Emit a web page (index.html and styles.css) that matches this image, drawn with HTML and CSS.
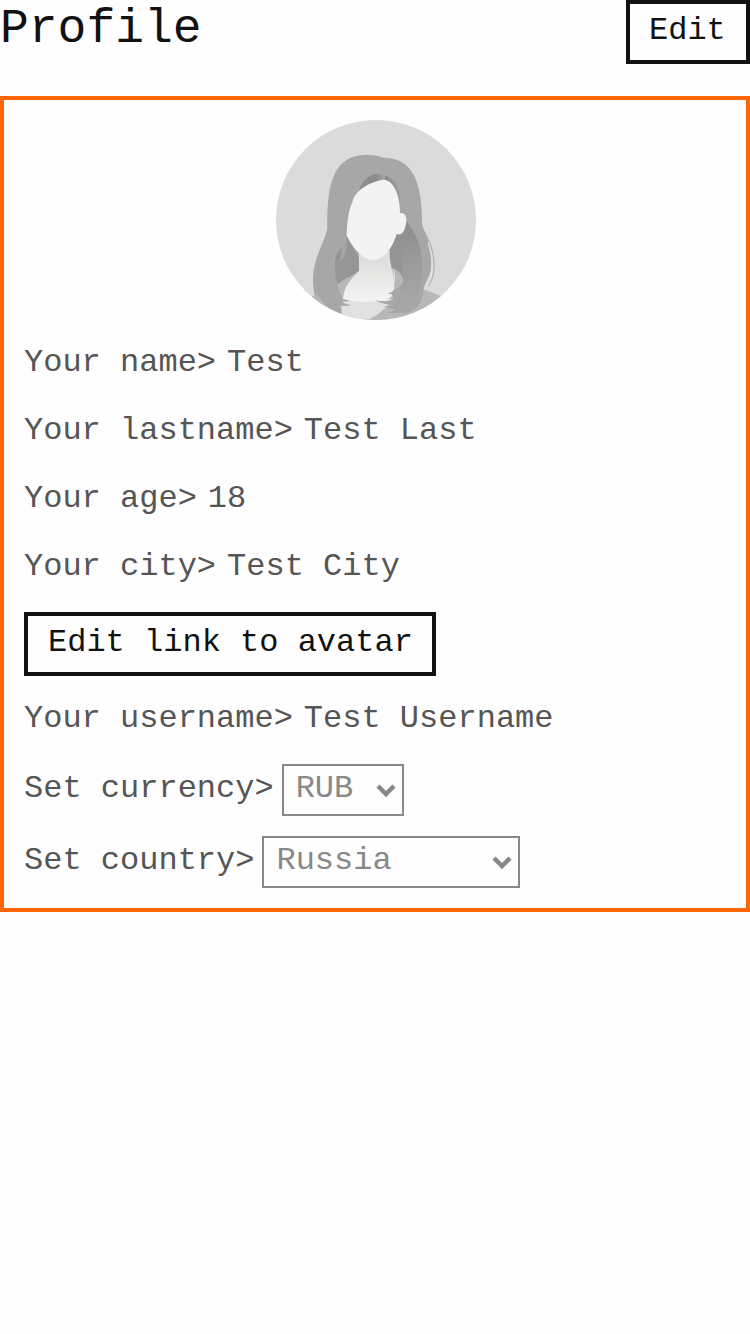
FILE: index.html
```html
<!DOCTYPE html>
<html lang="en">
<head>
<meta charset="utf-8">
<title>Profile</title>
<link rel="stylesheet" href="styles.css">
</head>
<body>
<header class="header">
  <h1 class="title">Profile</h1>
  <button class="button button-edit" type="button">Edit</button>
</header>
<main class="card">
  <svg class="avatar" viewBox="18 18 600 600" role="img" aria-label="Avatar">
    <defs>
      <clipPath id="disc"><circle cx="318" cy="318" r="300"/></clipPath>
      <linearGradient id="neck" x1="0" y1="0" x2="0" y2="1"><stop offset=".2" stop-color="#dfdfde"/><stop offset="1" stop-color="#f4f4f4"/></linearGradient>
      <linearGradient id="lock" gradientUnits="userSpaceOnUse" x1="400" y1="340" x2="430" y2="560"><stop offset="0" stop-color="#8e8e8e"/><stop offset=".5" stop-color="#9b9b9b"/><stop offset="1" stop-color="#a6a6a6"/></linearGradient>
      <linearGradient id="fringe" gradientUnits="userSpaceOnUse" x1="267" y1="0" x2="392" y2="0"><stop offset="0" stop-color="#8f8f8f"/><stop offset=".4" stop-color="#8c8c8c"/><stop offset=".6" stop-color="#a5a5a5"/><stop offset=".64" stop-color="#8c8c8c"/><stop offset="1" stop-color="#9c9c9c"/></linearGradient>
    </defs>
    <g clip-path="url(#disc)">
      <path fill="#dbdbdb" d="M18 18H618V618H18Z"/>
      <path fill="#b8b8b8" d="M100 558C180 528 220 503 267 475L365 460L400 492L460 526L550 560V620H100Z"/>
      <path fill="#e1e1e1" d="M215 555H372C350 580 330 600 290 620H215Z"/>
      <!-- hair -->
      <path fill="#a7a7a7" d="M172 345C170 220 185 123 290 122C320 122 336 131 350 132C430 134 457 215 456 320C457 344 466 356 473 378C484 410 487 440 482 470C477 494 462 508 461 527C456 575 435 597 395 597H352Q370 593 380 586Q356 584 340 577Q365 578 376 572L340 440H267L225 400C190 430 193 500 210 530Q220 552 240 560Q227 564 214 563Q228 572 244 573Q227 579 208 574L215 598C180 592 163 570 142 543L134 545C115 450 158 402 172 345Z"/>
      <!-- shaded hair behind the neck -->
      <path fill="#969696" d="M230 365C222 378 223 397 216 400C200 416 195 430 195 447C195 480 197 500 203 512C222 493 253 487 267 470V435Z"/>
      <path fill="#b8b8b8" d="M203 512C222 493 246 488 267 470C253 490 230 508 219 555C211 542 207 525 203 512Z"/>
      <path fill="#a7a7a7" d="M226 355C213 390 220 420 207 444C227 430 231 405 229 369Z"/>
      <path fill="url(#lock)" d="M409 318C430 355 456 380 456 450C457 510 450 575 405 597L352 597Q370 593 380 586Q356 584 340 577Q365 578 376 572C350 571 329 567 313 558Q350 566 368 562Q390 557 391 546Q371 543 354 537Q380 540 388 525L372 524L369 463C358 440 358 430 360 400L382 358Z"/>
      <path fill="#929292" opacity=".6" d="M382 355C398 360 407 342 409 318C403 345 396 382 398 430L399 488L369 463C358 440 358 430 360 400Z"/>
      <path fill="#b8b8b8" d="M368 461C387 472 399 484 399 498C398 514 385 522 372 528Z"/>
      <path fill="url(#neck)" d="M267 410H359C357 460 376 480 372 524C370 531 365 537 354 537Q364 541 368 541C362 553 350 559 336 561C295 565 250 565 219 555C223 510 244 497 267 470Z"/>
      <path fill="#a7a7a7" d="M313 558Q350 568 372 554L384 576Q350 574 313 558ZM354 537Q380 538 389 520L395 550Q371 546 354 537Z"/>
      <path fill="url(#fringe)" d="M267 229C276 201 297 180 321 180C367 181 391 212 390 265L350 210L300 208Z"/>
      <path fill="#f3f3f3" d="M247 265C254 231 297 205 335 198C365 191 391 237 390 298C403 294 411 307 409 323C406 348 397 367 380 360C369 397 345 438 309 438C275 438 245 394 230 365C231 325 235 291 247 265Z"/>
      <path fill="none" stroke="#f1f1f1" stroke-width="3" d="M368 466Q376 479 371 508"/>
      <path fill="none" stroke="#9f9f9f" stroke-width="2.5" d="M458 345C494 398 505 476 474 518"/>
      <path fill="none" stroke="#e5e5e5" stroke-width="2.5" d="M474 387C491 437 490 488 468 523"/>
    </g>
  </svg>
  <div class="row"><span>Your name&gt;</span><span class="value">Test</span></div>
  <div class="row"><span>Your lastname&gt;</span><span class="value">Test Last</span></div>
  <div class="row"><span>Your age&gt;</span><span class="value">18</span></div>
  <div class="row"><span>Your city&gt;</span><span class="value">Test City</span></div>
  <button class="button button-avatar" type="button">Edit link to avatar</button>
  <div class="row"><span>Your username&gt;</span><span class="value">Test Username</span></div>
  <div class="row row-select"><span>Set currency&gt;</span>
    <div class="select currency"><span>RUB</span><svg class="chevron" viewBox="0 0 20 14"><path d="M2 3L10 11L18 3"/></svg></div>
  </div>
  <div class="row row-select"><span>Set country&gt;</span>
    <div class="select country"><span>Russia</span><svg class="chevron" viewBox="0 0 20 14"><path d="M2 3L10 11L18 3"/></svg></div>
  </div>
</main>
</body>
</html>
```
FILE: styles.css
```css
* { box-sizing: border-box; }
body {
  margin: 0;
  background: #fefefe;
  color: #111;
  font: 32px/46px "Liberation Mono", monospace;
}
.header {
  display: flex;
  justify-content: space-between;
  align-items: flex-start;
  height: 96px;
}
.title {
  margin: 0;
  font-size: 48px;
  font-weight: 400;
  line-height: 58px;
}
.button {
  height: 64px;
  padding: 0 0 2px 20px;
  border: 4px solid #111;
  background: #fefefe;
  color: #111;
  font: inherit;
  line-height: 54px;
  text-align: left;
  white-space: nowrap;
}
.button-edit { width: 124px; padding-left: 19px; }
.button-avatar { width: 412px; }
.card {
  display: flex;
  flex-direction: column;
  align-items: flex-start;
  gap: 20px;
  height: 816px;
  padding: 20px;
  border: 4px solid #f60;
}
.avatar {
  display: block;
  width: 200px;
  height: 200px;
  align-self: center;
  margin-left: 2px;
}
.row {
  display: flex;
  gap: 8px;
  height: 48px;
  color: #555;
  white-space: pre;
}
.value { padding-left: 3px; }
.row-select {
  height: 52px;
  line-height: 50px;
}
.select {
  display: flex;
  align-items: center;
  justify-content: space-between;
  height: 52px;
  padding: 0 6px 2px 12px;
  border: 2px solid #888;
  color: #888;
}
.currency { width: 122px; }
.country { width: 258px; }
.chevron {
  width: 20px;
  height: 14px;
  margin-top: 2px;
  fill: none;
  stroke: #888;
  stroke-width: 4.5;
}
```
